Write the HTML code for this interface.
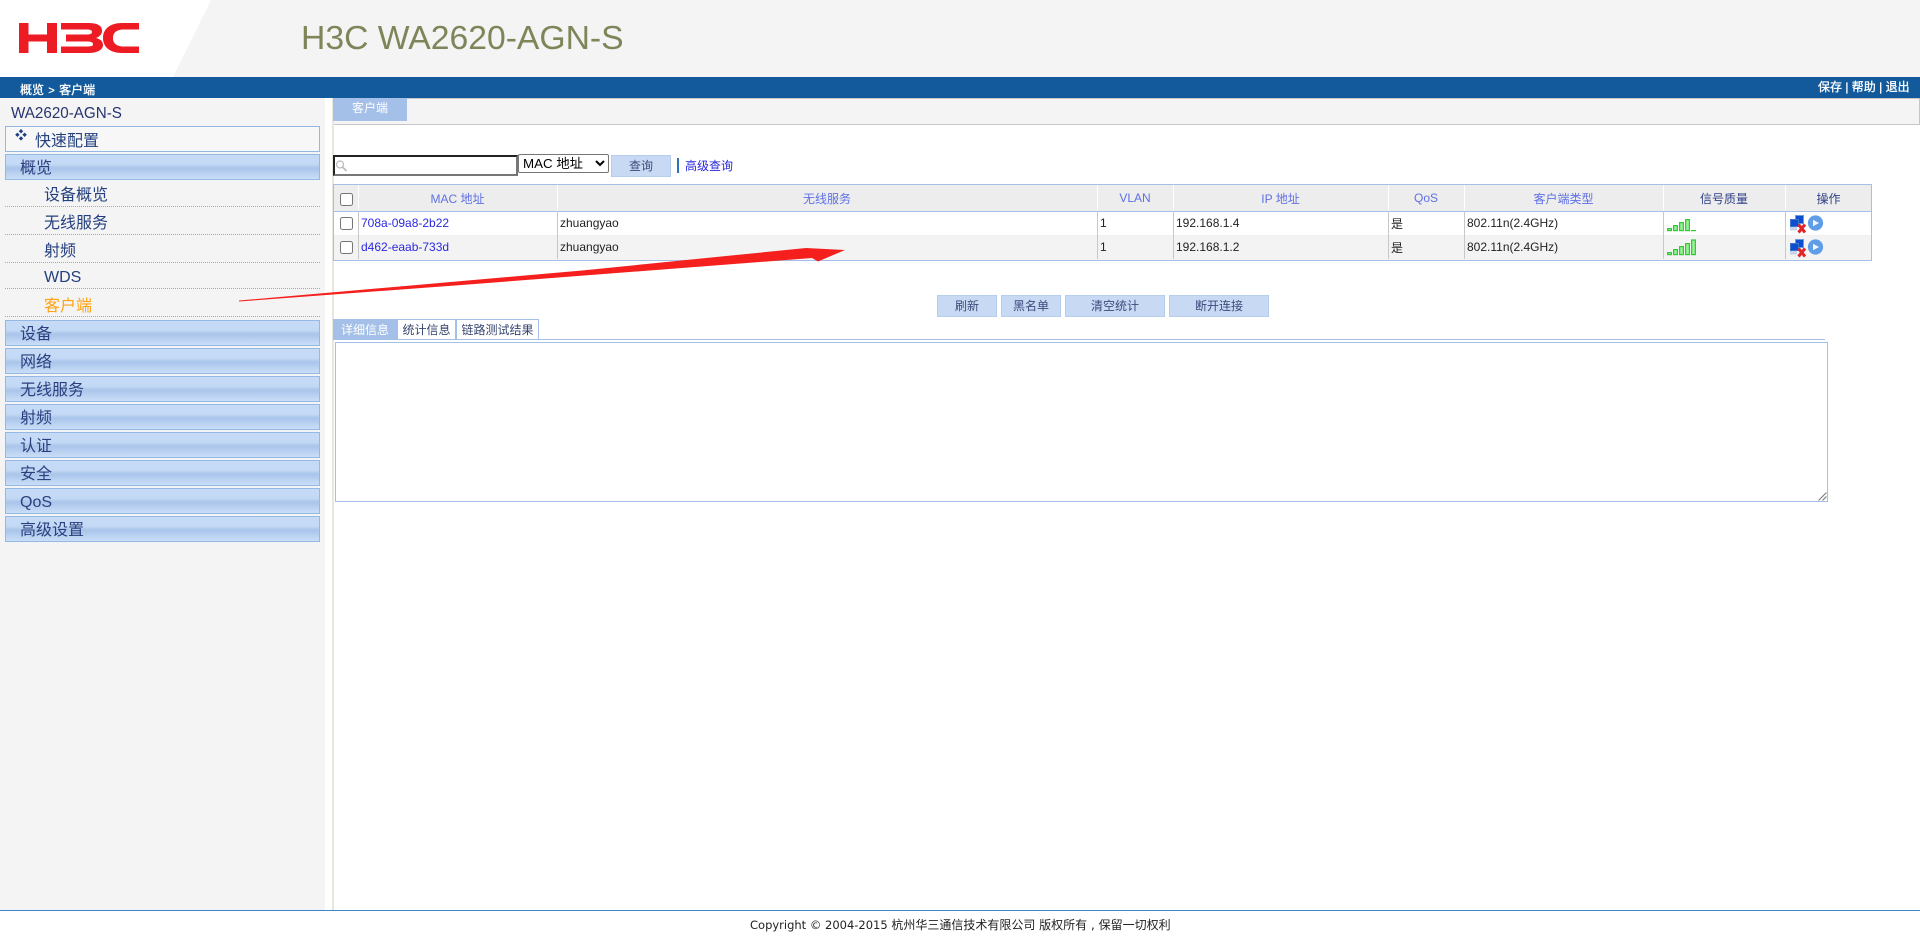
<!DOCTYPE html>
<html lang="zh-CN">
<head>
<meta charset="utf-8">
<title>H3C WA2620-AGN-S</title>
<style>
html,body{margin:0;padding:0;background:#fff}
body{position:relative;width:1920px;height:937px;overflow:hidden;font:12px "Liberation Sans","Noto Sans CJK SC",sans-serif;color:#222}
div,a,span,input,select,textarea,svg{position:absolute;box-sizing:border-box}
div span,.t span{position:static}
.t{white-space:nowrap;line-height:16px}
.c{text-align:center}
.side{left:5px;width:315px;height:26px;border:1px solid #94b8e4;background:linear-gradient(#c6dbf6 0,#c4d9f5 38%,#a9c5ea 55%,#bcd3f2 80%,#c9def7 100%);font-size:16px;line-height:27px;padding-left:14px;color:#2a3f7e;white-space:nowrap}
.sub{left:44px;font-size:16px;line-height:20px;color:#25407f;white-space:nowrap}
.dot{left:5px;width:315px;height:0;border-top:1px dotted #a8a8a8}
.vl{width:1px;background:#c8c8c8;top:212px;height:47px}
.vh{width:1px;background:#fff;top:185px;height:26px}
.th{top:191px;color:#5f70e6;line-height:16px;text-align:center;white-space:nowrap}
.td{line-height:16px;white-space:nowrap;color:#222}
.lnk{color:#2a2adf}
.btn{top:295px;height:22px;background:#c8d9f3;border:1px solid #b6cdee;text-align:center;line-height:20px;color:#3c4a7c}
.tab{top:319px;height:20px;border:1px solid #a4c0e8;border-bottom:0;text-align:center;line-height:21px;color:#37466f}
</style>
</head>
<body>

<!-- header -->
<div style="left:0;top:0;width:1920px;height:77px;background:#f4f4f4"></div>
<svg style="left:0;top:0" width="220" height="77" viewBox="0 0 220 77"><polygon points="0,0 211,0 173,77 0,77" fill="#fff"/></svg>
<svg style="left:0;top:0" width="150" height="60" viewBox="0 0 150 60" fill="#ed1c24">
  <path d="M19 23h9.500v11.500h18.500V23h10v30H47V41.500H28.500V53H19z"/>
  <path d="M61 23H88C97 23 102 25.500 102 30.500C102 34 100 36.500 96 38C100 39 103 41 103 45C103 50 97 53 88 53H61V46.500H86C91 46.500 93 46 93 44.500C93 42 91 41.500 86 41.500H66V34.500H86C90 34.500 92 34 92 32C92 30 90 29.500 86 29.500H61Z"/>
  <path d="M139 23H122C110 23 103 29 103 38C103 47 110 53 122 53H139V46.500H124C116 46.500 113 43 113 38C113 33 116 29.500 124 29.500H139Z"/>
</svg>
<div class="t" style="left:301px;top:18px;font-size:33.700px;line-height:40px;color:#7f8459">H3C WA2620-AGN-S</div>

<!-- blue bar -->
<div style="left:0;top:77px;width:1920px;height:21px;background:#125a9b"></div>
<div class="t" style="left:20px;top:82px;color:#fff;-webkit-text-stroke:.3px #fff">概览 <span style="font-size:11px;margin:0 1px">&gt;</span> 客户端</div>
<div class="t" style="left:1818px;top:79px;color:#fff;-webkit-text-stroke:.3px #fff">保存 | 帮助 | 退出</div>

<!-- sidebar -->
<div style="left:0;top:98px;width:325px;height:812px;background:#f4f4f4"></div>
<div style="left:332px;top:98px;width:2px;height:812px;background:#e9e7d9"></div>
<div class="t" style="left:11px;top:104px;font-size:16px;line-height:20px;color:#27346f;transform:scaleX(.95);transform-origin:0 0">WA2620-AGN-S</div>

<div style="left:5px;top:126px;width:315px;height:26px;border:1px solid #94b8e4;background:#f7f7f7"></div>
<svg style="left:15px;top:129px" width="12" height="12" viewBox="0 0 12 12" fill="#1d3f86"><path d="M6 0l2.200 2.200-2.200 2.200-2.200-2.200zM2.400 3.600l2.200 2.200-2.200 2.200-2.200-2.200zM9.600 3.600l2.200 2.200-2.200 2.200-2.200-2.200zM6 7.200l2.200 2.200-2.200 2.200-2.200-2.200z"/></svg>
<div class="sub" style="left:35px;top:132px">快速配置</div>

<div class="side" style="top:154px">概览</div>
<div class="sub" style="top:186px">设备概览</div>
<div class="dot" style="top:206px"></div>
<div class="sub" style="top:214px">无线服务</div>
<div class="dot" style="top:234px"></div>
<div class="sub" style="top:242px">射频</div>
<div class="dot" style="top:262px"></div>
<div class="sub" style="top:268px">WDS</div>
<div class="dot" style="top:288px"></div>
<div class="sub" style="top:297px;color:#ffa312">客户端</div>
<div class="dot" style="top:316px"></div>

<div class="side" style="top:320px">设备</div>
<div class="side" style="top:348px">网络</div>
<div class="side" style="top:376px">无线服务</div>
<div class="side" style="top:404px">射频</div>
<div class="side" style="top:432px">认证</div>
<div class="side" style="top:460px">安全</div>
<div class="side" style="top:488px">QoS</div>
<div class="side" style="top:516px">高级设置</div>

<!-- tab strip -->
<div style="left:334px;top:98px;width:1586px;height:27px;background:#f4f4f4;border-top:1px solid #c6c6c6;border-bottom:1px solid #c6c6c6;border-right:1px solid #c6c6c6"></div>
<div class="t c" style="left:333px;top:98px;width:74px;height:23px;background:#a4c0e8;color:#fff;line-height:21px">客户端</div>

<!-- search row -->
<div style="left:333px;top:155px;width:185px;height:21px;background:#fff;border:2px solid;border-color:#222 #777 #777 #222"></div>
<svg style="left:335px;top:159px" width="14" height="14" viewBox="0 0 14 14" fill="none" stroke="#bbb" stroke-width="1.200"><circle cx="5" cy="5.500" r="3.500"/><path d="M7.500 8l4 4" stroke-width="1.800"/></svg>
<select style="left:518px;top:154px;width:91px;height:19px;margin:0;padding:0;font:13.330px 'Liberation Sans','Noto Sans CJK SC',sans-serif;color:#000;background:#fff;border:1px solid #767676;border-radius:2px"><option>MAC 地址</option></select>
<div class="btn" style="left:611px;top:155px;width:60px">查询</div>
<div style="left:677px;top:158px;width:2px;height:15px;background:#2c74b5"></div>
<div class="t lnk" style="left:685px;top:158px;color:#2626dd">高级查询</div>

<!-- table -->
<div style="left:333px;top:184px;width:1539px;height:77px;border:1px solid #a4c0e8;background:#fff"></div>
<div style="left:334px;top:185px;width:1537px;height:26px;background:#ededed"></div>
<div style="left:334px;top:211px;width:1537px;height:1px;background:#a4c0e8"></div>
<div style="left:334px;top:235px;width:1537px;height:1px;background:#f0f0f0"></div>
<div style="left:334px;top:236px;width:1537px;height:24px;background:#f3f3f3"></div>

<div class="vh" style="left:358px"></div><div class="vh" style="left:557px"></div><div class="vh" style="left:1097px"></div><div class="vh" style="left:1173px"></div><div class="vh" style="left:1388px"></div><div class="vh" style="left:1464px"></div><div class="vh" style="left:1663px"></div><div class="vh" style="left:1785px"></div>
<div class="vl" style="left:358px"></div><div class="vl" style="left:557px"></div><div class="vl" style="left:1097px"></div><div class="vl" style="left:1173px"></div><div class="vl" style="left:1388px"></div><div class="vl" style="left:1464px"></div><div class="vl" style="left:1663px"></div><div class="vl" style="left:1785px"></div>

<input type="checkbox" style="left:340px;top:193px;width:13px;height:13px;margin:0">
<input type="checkbox" style="left:340px;top:217px;width:13px;height:13px;margin:0">
<input type="checkbox" style="left:340px;top:241px;width:13px;height:13px;margin:0">

<div class="th" style="left:358px;width:199px">MAC 地址</div>
<div class="th" style="left:557px;width:540px">无线服务</div>
<div class="th" style="left:1097px;width:76px;top:190px">VLAN</div>
<div class="th" style="left:1173px;width:215px">IP 地址</div>
<div class="th" style="left:1388px;width:76px;top:190px">QoS</div>
<div class="th" style="left:1464px;width:199px">客户端类型</div>
<div class="th" style="left:1663px;width:122px;color:#2f3f85">信号质量</div>
<div class="th" style="left:1785px;width:87px;color:#2f3f85">操作</div>

<div class="td lnk" style="left:361px;top:215px">708a-09a8-2b22</div>
<div class="td" style="left:560px;top:215px">zhuangyao</div>
<div class="td" style="left:1100px;top:215px">1</div>
<div class="td" style="left:1176px;top:215px">192.168.1.4</div>
<div class="td" style="left:1391px;top:216px">是</div>
<div class="td" style="left:1467px;top:215px">802.11n(2.4GHz)</div>

<div class="td lnk" style="left:361px;top:239px">d462-eaab-733d</div>
<div class="td" style="left:560px;top:239px">zhuangyao</div>
<div class="td" style="left:1100px;top:239px">1</div>
<div class="td" style="left:1176px;top:239px">192.168.1.2</div>
<div class="td" style="left:1391px;top:240px">是</div>
<div class="td" style="left:1467px;top:239px">802.11n(2.4GHz)</div>

<!-- signal row 1 -->
<svg style="left:1666px;top:215px" width="36" height="18" viewBox="0 0 36 18" fill="#93f293" stroke="#33c933" stroke-width="1.200">
  <rect x="1.600" y="13.600" width="3.800" height="2"/><rect x="7.600" y="10.600" width="3.800" height="5"/><rect x="13.600" y="7.600" width="3.800" height="8"/><rect x="19.600" y="4.600" width="3.800" height="11"/><path d="M25 15.600h5" fill="none"/>
</svg>
<!-- signal row 2 -->
<svg style="left:1666px;top:239px" width="36" height="18" viewBox="0 0 36 18" fill="#93f293" stroke="#33c933" stroke-width="1.200">
  <rect x="1.600" y="13.600" width="3.800" height="2"/><rect x="7.600" y="10.600" width="3.800" height="5"/><rect x="13.600" y="7.600" width="3.800" height="8"/><rect x="19.600" y="4.600" width="3.800" height="11"/><rect x="25.600" y="1" width="3.800" height="14.600"/>
</svg>

<!-- action icons -->
<svg style="left:1789px;top:214px" width="36" height="22" viewBox="0 0 36 22">
  <rect x="6.500" y="1.500" width="8" height="8" fill="#0b4fd0" stroke="#6f9ae0" stroke-width="1"/>
  <rect x="1.500" y="5.500" width="8" height="7" fill="#0b4fd0" stroke="#3f72c8" stroke-width="1"/>
  <rect x="1" y="13" width="7" height="3.500" fill="#c7d3e6"/>
  <path d="M9.500 10.500l6.500 8M16 10.500l-6.500 8" stroke="#e0252b" stroke-width="3" fill="none"/>
  <circle cx="26.500" cy="9" r="7.600" fill="#5f9de8"/>
  <path d="M24 5.700l6 3.300-6 3.300z" fill="#f2f6fd"/>
</svg>
<svg style="left:1789px;top:238px" width="36" height="22" viewBox="0 0 36 22">
  <rect x="6.500" y="1.500" width="8" height="8" fill="#0b4fd0" stroke="#6f9ae0" stroke-width="1"/>
  <rect x="1.500" y="5.500" width="8" height="7" fill="#0b4fd0" stroke="#3f72c8" stroke-width="1"/>
  <rect x="1" y="13" width="7" height="3.500" fill="#c7d3e6"/>
  <path d="M9.500 10.500l6.500 8M16 10.500l-6.500 8" stroke="#e0252b" stroke-width="3" fill="none"/>
  <circle cx="26.500" cy="9" r="7.600" fill="#5f9de8"/>
  <path d="M24 5.700l6 3.300-6 3.300z" fill="#f2f6fd"/>
</svg>

<!-- buttons -->
<div class="btn" style="left:937px;width:60px">刷新</div>
<div class="btn" style="left:1001px;width:60px">黑名单</div>
<div class="btn" style="left:1065px;width:100px">清空统计</div>
<div class="btn" style="left:1169px;width:100px">断开连接</div>

<!-- detail tabs -->
<div class="tab" style="left:333px;width:64px;background:#a4c0e8;color:#fff">详细信息</div>
<div class="tab" style="left:397px;width:59px;background:#fff">统计信息</div>
<div class="tab" style="left:456px;width:83px;background:#fff">链路测试结果</div>
<div style="left:333px;top:339px;width:1492px;height:1px;background:#a4c0e8"></div>
<div style="left:335px;top:342px;width:1493px;height:160px;border:1px solid #a4c0e8;background:#fff"></div>
<svg style="left:1817px;top:491px" width="10" height="10" viewBox="0 0 10 10" stroke="#777" stroke-width="1" fill="none"><path d="M1.500 9.500l8-8M5.500 9.500l4-4"/></svg>

<!-- footer -->
<div style="left:0;top:910px;width:1920px;height:1px;background:#3d86c8"></div>
<div class="t" style="left:750px;top:917px;font-family:'DejaVu Sans','Noto Sans CJK SC',sans-serif;font-size:11.500px;color:#222">Copyright © 2004-2015 <span style="font-size:12px">杭州华三通信技术有限公司 版权所有 , 保留一切权利</span></div>

<!-- annotation arrow -->
<svg style="left:0;top:0;pointer-events:none" width="1920" height="937" viewBox="0 0 1920 937"><polygon points="239,300.500 582,270.500 806,248 845,250 818,261.500 812,258 455,285.500 239,301.500" fill="#f5201e"/></svg>

</body>
</html>
